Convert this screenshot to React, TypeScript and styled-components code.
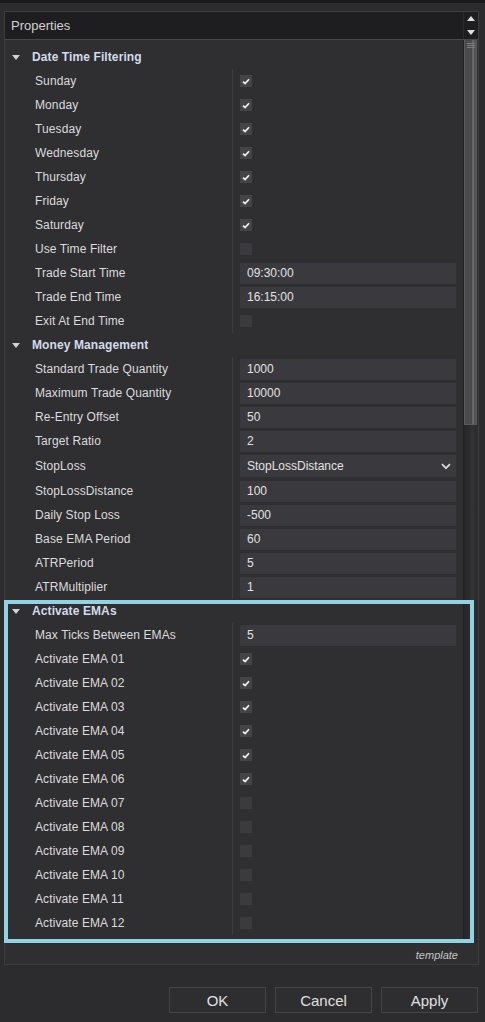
import React from 'react';
import styled, { createGlobalStyle } from 'styled-components';

const Global = createGlobalStyle`
  html, body { margin: 0; padding: 0; background: #2c2c2e; }
  body {
    font-family: "Liberation Sans", Arial, sans-serif;
    width: 485px;
    height: 1022px;
    overflow: hidden;
  }
  * { box-sizing: border-box; }
`;

type Prop =
  | { label: string; kind: 'check'; checked: boolean }
  | { label: string; kind: 'text'; value: string }
  | { label: string; kind: 'select'; value: string };

type Section = { title: string; highlighted?: boolean; rows: Prop[] };

const days = ['Sunday', 'Monday', 'Tuesday', 'Wednesday', 'Thursday', 'Friday', 'Saturday'];

const sections: Section[] = [
  {
    title: 'Date Time Filtering',
    rows: [
      ...days.map((d) => ({ label: d, kind: 'check' as const, checked: true })),
      { label: 'Use Time Filter', kind: 'check', checked: false },
      { label: 'Trade Start Time', kind: 'text', value: '09:30:00' },
      { label: 'Trade End Time', kind: 'text', value: '16:15:00' },
      { label: 'Exit At End Time', kind: 'check', checked: false },
    ],
  },
  {
    title: 'Money Management',
    rows: [
      { label: 'Standard Trade Quantity', kind: 'text', value: '1000' },
      { label: 'Maximum Trade Quantity', kind: 'text', value: '10000' },
      { label: 'Re-Entry Offset', kind: 'text', value: '50' },
      { label: 'Target Ratio', kind: 'text', value: '2' },
      { label: 'StopLoss', kind: 'select', value: 'StopLossDistance' },
      { label: 'StopLossDistance', kind: 'text', value: '100' },
      { label: 'Daily Stop Loss', kind: 'text', value: '-500' },
      { label: 'Base EMA Period', kind: 'text', value: '60' },
      { label: 'ATRPeriod', kind: 'text', value: '5' },
      { label: 'ATRMultiplier', kind: 'text', value: '1' },
    ],
  },
  {
    title: 'Activate EMAs',
    highlighted: true,
    rows: [
      { label: 'Max Ticks Between EMAs', kind: 'text', value: '5' },
      ...Array.from({ length: 12 }, (_, i) => ({
        label: `Activate EMA ${String(i + 1).padStart(2, '0')}`,
        kind: 'check' as const,
        checked: i < 6,
      })),
    ],
  },
];

const Page = styled.div`
  display: flex;
  flex-direction: column;
  height: 1022px;
`;

const TopStrip = styled.div`
  height: 3px;
  background: #1a1a1b;
`;

const Panel = styled.div`
  margin: 8px 6px 0 4px;
  height: 954px;
  border: 1px solid #3d3d40;
  background: #2f2e31;
  display: flex;
  flex-direction: column;
`;

const Header = styled.div`
  height: 28px;
  flex: none;
  display: flex;
  align-items: stretch;
  background: #1e1d20;
  border-bottom: 1px solid #48474b;
`;

const Title = styled.div`
  flex: 1;
  display: flex;
  align-items: center;
  padding-left: 6px;
  font-size: 13px;
  color: #d2d2d2;
`;

const ArrowCol = styled.div`
  width: 14px;
  margin-right: 1px;
  border-left: 1px solid #2c2c2e;
  display: flex;
  flex-direction: column;
  align-items: center;
  justify-content: space-between;
  padding: 4px 0 4px;
`;

const Body = styled.div`
  height: 905px;
  flex: none;
  display: flex;
`;

const Grid = styled.div`
  flex: 1;
  padding-top: 5px;
  display: flex;
  flex-direction: column;
`;

const SectionBox = styled.div<{ $highlighted?: boolean }>`
  position: relative;
  display: flex;
  flex-direction: column;
  ${(p) =>
    p.$highlighted &&
    `
    &::after {
      content: '';
      position: absolute;
      left: -1px;
      top: 1px;
      right: -11px;
      bottom: -8px;
      border: 4px solid #92d2e5;
      pointer-events: none;
      z-index: 2;
    }
  `}
`;

const CategoryRow = styled.div`
  height: 24px;
  display: flex;
  align-items: center;
  padding-left: 7px;
  font-size: 12px;
  font-weight: bold;
  color: #d3dcea;
  letter-spacing: 0.1px;
`;

const Caret = styled.span`
  width: 0;
  height: 0;
  border-left: 4.5px solid transparent;
  border-right: 4.5px solid transparent;
  border-top: 5px solid #d0d0d0;
  margin-right: 12px;
`;

const Row = styled.div<{ $tall?: boolean }>`
  height: ${(p) => (p.$tall ? 26 : 24)}px;
  display: grid;
  grid-template-columns: 228px 1fr;
`;

const LabelCell = styled.div`
  padding-left: 30px;
  border-right: 1px solid #3c3c3f;
  display: flex;
  align-items: center;
  font-size: 12px;
  color: #dcdcdc;
  white-space: nowrap;
  letter-spacing: 0.1px;
`;

const ValueCell = styled.div`
  padding: 0 7px 0 7px;
  display: flex;
  align-items: center;
`;

const TextBox = styled.div`
  width: 100%;
  height: 21px;
  background: #3a393d;
  padding-left: 7px;
  display: flex;
  align-items: center;
  font-size: 12px;
  color: #e2e2e2;
`;

const SelectBox = styled(TextBox)`
  height: 22px;
  justify-content: space-between;
  padding-right: 5px;
`;

const CheckBox = styled.div<{ $checked: boolean }>`
  width: 12px;
  height: 12px;
  background: ${(p) => (p.$checked ? '#444347' : '#3b3a3e')};
  display: flex;
  align-items: center;
  justify-content: center;
`;

const Scrollbar = styled.div`
  width: 14px;
  margin-right: 1px;
  height: 903px;
  background: linear-gradient(to right, #262628 0, #2c2c2e 40%, #333335 70%, #28282a 100%);
  border-left: 1px solid #222224;
  display: flex;
  flex-direction: column;
`;

const Thumb = styled.div`
  height: 385px;
  border: 1px solid #5a5a5c;
  border-top: none;
  background: linear-gradient(to right, #4a4a4c 0, #4a4a4c 62%, #66666a 62%, #66666a 78%, #535355 78%);
  padding-top: 3px;
  display: flex;
  justify-content: center;
`;

const Grip = styled.div`
  width: 8px;
  height: 6px;
  background: repeating-linear-gradient(to bottom, #7a7a7c 0, #7a7a7c 1px, transparent 1px, transparent 2px);
`;

const Footer = styled.div`
  flex: 1;
  display: flex;
  align-items: center;
  justify-content: flex-end;
  padding-right: 20px;
  font-size: 11px;
  font-style: italic;
  color: #c6c6c6;
`;

const ButtonBar = styled.div`
  margin-top: 22px;
  display: flex;
  justify-content: flex-end;
  gap: 9px;
  padding-right: 7px;
`;

const Button = styled.button`
  width: 97px;
  height: 26px;
  background: #2e2e30;
  border: 1px solid #444446;
  color: #e0e0e0;
  font-family: "Liberation Sans", Arial, sans-serif;
  font-size: 15px;
  padding: 0;
`;

const Check = () => (
  <svg width="8" height="7" viewBox="0 0 8 7">
    <path d="M1 3.6 L3.1 5.6 L7 1.2" fill="none" stroke="#f2f2f2" strokeWidth="1.7" />
  </svg>
);

const Chevron = () => (
  <svg width="10" height="7" viewBox="0 0 10 7">
    <path d="M1 1.2 L5 5.2 L9 1.2" fill="none" stroke="#d8d8d8" strokeWidth="1.8" />
  </svg>
);

const Arrow = ({ up }: { up?: boolean }) => (
  <svg width="8" height="5" viewBox="0 0 8 5">
    <path d={up ? 'M0 5 L4 0 L8 5 Z' : 'M0 0 L4 5 L8 0 Z'} fill="#dedede" />
  </svg>
);

const Value = ({ p }: { p: Prop }) => {
  if (p.kind === 'check')
    return <CheckBox $checked={p.checked}>{p.checked && <Check />}</CheckBox>;
  if (p.kind === 'select')
    return (
      <SelectBox>
        <span>{p.value}</span>
        <Chevron />
      </SelectBox>
    );
  return <TextBox>{p.value}</TextBox>;
};

export default function App() {
  return (
    <Page>
      <Global />
      <TopStrip />
      <Panel>
        <Header>
          <Title>Properties</Title>
          <ArrowCol>
            <Arrow up />
            <Arrow />
          </ArrowCol>
        </Header>
        <Body>
          <Grid>
            {sections.map((s) => (
              <SectionBox key={s.title} $highlighted={s.highlighted}>
                <CategoryRow>
                  <Caret />
                  {s.title}
                </CategoryRow>
                {s.rows.map((r) => (
                  <Row key={r.label} $tall={r.kind === 'select'}>
                    <LabelCell>{r.label}</LabelCell>
                    <ValueCell>
                      <Value p={r} />
                    </ValueCell>
                  </Row>
                ))}
              </SectionBox>
            ))}
          </Grid>
          <Scrollbar>
            <Thumb>
              <Grip />
            </Thumb>
          </Scrollbar>
        </Body>
        <Footer>template</Footer>
      </Panel>
      <ButtonBar>
        <Button>OK</Button>
        <Button>Cancel</Button>
        <Button>Apply</Button>
      </ButtonBar>
    </Page>
  );
}
